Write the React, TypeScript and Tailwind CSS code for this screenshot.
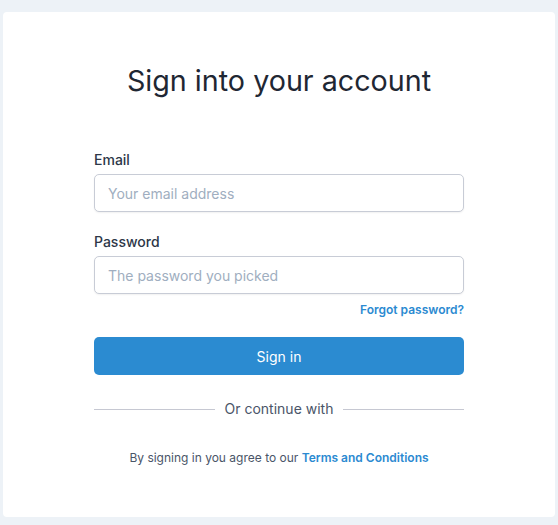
import React from "react";

function Field({ label, placeholder, type }: { label: string; placeholder: string; type: string }) {
  return (
    <div className="flex flex-col">
      <label className="text-[14px] leading-5 font-medium text-[#2d3748]">{label}</label>
      <input
        type={type}
        placeholder={placeholder}
        className="mt-[4px] h-[38px] w-full rounded-[5px] border border-[#c8ccd6] bg-white px-[13px] text-[14px] text-[#2d3748] placeholder:text-[#a0aec0] shadow-[0_1px_2px_rgba(0,0,0,0.06)] outline-none"
      />
    </div>
  );
}

export default function App() {
  return (
    <div className="h-[525px] w-full bg-[#edf2f7] px-[3px] pt-[12px] font-['Inter',sans-serif]">
      <div className="h-[505px] rounded-[4px] bg-white px-[91px] pt-[50px]">
        <h1 className="text-center text-[28.7px] leading-[38px] font-normal text-[#1f2733]">
          Sign into your account
        </h1>

        <div className="mt-[50px]">
          <Field label="Email" placeholder="Your email address" type="email" />
        </div>
        <div className="mt-[20px]">
          <Field label="Password" placeholder="The password you picked" type="password" />
        </div>

        <div className="mt-[8px] flex justify-end">
          <a className="text-[12px] leading-4 font-semibold text-[#2b8ad1]">Forgot password?</a>
        </div>

        <button className="mt-[19px] h-[38px] w-full rounded-[5px] bg-[#2b8bd1] text-[14px] text-white">
          Sign in
        </button>

        <div className="mt-[24px] flex items-center gap-[10px]">
          <div className="h-px flex-1 bg-[#c6c8d2]" />
          <span className="text-[14px] leading-5 text-[#4a5568]">Or continue with</span>
          <div className="h-px flex-1 bg-[#c6c8d2]" />
        </div>

        <p className="mt-[31px] text-center text-[12px] leading-4 text-[#4a5568]">
          By signing in you agree to our{" "}
          <a className="font-semibold text-[#2b8ad1]">Terms and Conditions</a>
        </p>
      </div>
    </div>
  );
}
